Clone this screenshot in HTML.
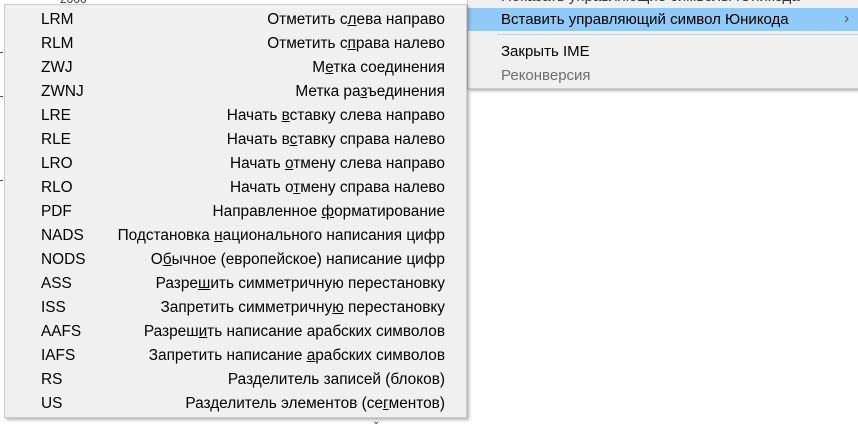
<!DOCTYPE html><html><head><meta charset="utf-8"><style>
body{margin:0;width:858px;height:422px;background:#fff;position:relative;overflow:hidden;font-family:"Segoe UI","Liberation Sans","DejaVu Sans",sans-serif;font-size:15.4px;color:#000}
.m{position:absolute;background:#f0f0f0;border:1px solid #ccc;box-shadow:2px 2px 3px rgba(0,0,0,.3)}
.r{position:absolute;height:24px;line-height:24px;white-space:nowrap}
.l{left:36px}
.rt{right:21px}
u{text-decoration:underline}
</style></head><body>
<div style="position:absolute;left:60px;top:-8px;font-size:12px;color:#333">2000</div>
<div style="position:absolute;left:0;top:52px;width:3px;height:1px;background:#555"></div>
<div style="position:absolute;left:0;top:96px;width:3px;height:1px;background:#555"></div>
<div style="position:absolute;left:0;top:180px;width:3px;height:1px;background:#555"></div>
<div style="position:absolute;left:372px;top:416px;font-size:10px;color:#333">⌄</div>
<div class="m" style="left:467px;top:-2px;width:390px;height:89px">
 <div class="r" style="left:33px;top:-14px;color:#333;font-size:15px">Показать управляющие символы Юникода</div>
 <div style="position:absolute;left:0;top:9px;width:390px;height:23px;background:#91c9f7"></div>
 <div class="r" style="left:33px;top:9px;font-size:15px">Вставить управляющий символ Юникода</div>
 <div class="r" style="left:376px;top:8px;color:#555">›</div>
 <div style="position:absolute;left:29px;top:35px;width:361px;height:1px;background:#ccc"></div>
 <div class="r" style="left:33px;top:41px;font-size:15px">Закрыть IME</div>
 <div class="r" style="left:33px;top:65px;color:#6d6d6d;font-size:15px">Реконверсия</div>
</div>
<div class="m" style="left:4px;top:4px;width:461px;height:412px">
<div class="r l" style="top:3px">LRM</div><div class="r rt" style="top:3px">Отметить с<u>л</u>ева направо</div>
<div class="r l" style="top:27px">RLM</div><div class="r rt" style="top:27px">Отметить с<u>п</u>рава налево</div>
<div class="r l" style="top:51px">ZWJ</div><div class="r rt" style="top:51px">М<u>е</u>тка соединения</div>
<div class="r l" style="top:75px">ZWNJ</div><div class="r rt" style="top:75px">Метка ра<u>з</u>ъединения</div>
<div class="r l" style="top:99px">LRE</div><div class="r rt" style="top:99px">Начать <u>в</u>ставку слева направо</div>
<div class="r l" style="top:123px">RLE</div><div class="r rt" style="top:123px">Начать в<u>с</u>тавку справа налево</div>
<div class="r l" style="top:147px">LRO</div><div class="r rt" style="top:147px">Начать <u>о</u>тмену слева направо</div>
<div class="r l" style="top:171px">RLO</div><div class="r rt" style="top:171px">Начать о<u>т</u>мену справа налево</div>
<div class="r l" style="top:195px">PDF</div><div class="r rt" style="top:195px">Направленное <u>ф</u>орматирование</div>
<div class="r l" style="top:219px">NADS</div><div class="r rt" style="top:219px">Подстановка <u>н</u>ационального написания цифр</div>
<div class="r l" style="top:243px">NODS</div><div class="r rt" style="top:243px">О<u>б</u>ычное (европейское) написание цифр</div>
<div class="r l" style="top:267px">ASS</div><div class="r rt" style="top:267px">Разре<u>ш</u>ить симметричную перестановку</div>
<div class="r l" style="top:291px">ISS</div><div class="r rt" style="top:291px">Запретить симметричну<u>ю</u> перестановку</div>
<div class="r l" style="top:315px">AAFS</div><div class="r rt" style="top:315px">Разреш<u>и</u>ть написание арабских символов</div>
<div class="r l" style="top:339px">IAFS</div><div class="r rt" style="top:339px">Запретить написание <u>а</u>рабских символов</div>
<div class="r l" style="top:363px">RS</div><div class="r rt" style="top:363px">Раз<u>д</u>елитель записей (блоков)</div>
<div class="r l" style="top:387px">US</div><div class="r rt" style="top:387px">Разделитель элементов (се<u>г</u>ментов)</div>
</div>
</body></html>
